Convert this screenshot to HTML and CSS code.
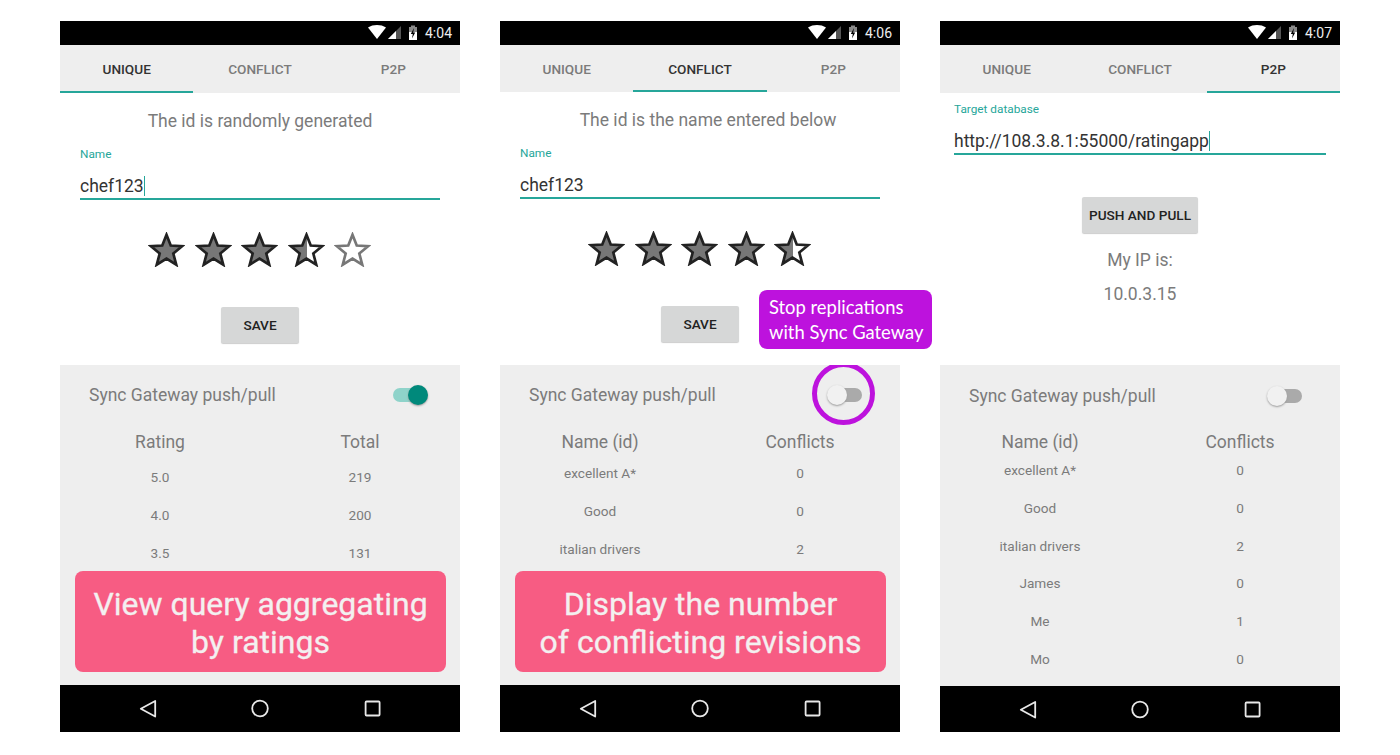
FILE: index.html
```html
<!DOCTYPE html>
<html lang="en">
<head>
  <meta charset="utf-8">
  <title>Rating app screens</title>
  <link rel="stylesheet" href="styles.css">
</head>
<body>

<svg class="defs" aria-hidden="true">
  <defs>
    <linearGradient id="half">
      <stop offset="50%" stop-color="#777"/>
      <stop offset="50%" stop-color="#fff"/>
    </linearGradient>
    <symbol id="star" viewBox="0 0 40 38">
      <polygon points="20,3 24.6,14.7 37,15.4 27.4,23.4 30.6,35.5 20,28.8 9.4,35.5 12.6,23.4 3,15.4 15.4,14.7"/>
    </symbol>
    <symbol id="status" viewBox="0 0 50 16">
      <path d="M0 2.5 C5 -0.8 13 -0.8 18 2.5 L9 14 Z" fill="#fff"/>
      <path d="M20 14 L33 1 V14 Z" fill="#555"/>
      <path d="M20 14 L28 6 V14 Z" fill="#fff"/>
      <path d="M43 0.5 V2 H41 V15 H49 V2 H47 V0.5 Z" fill="#888"/>
      <path d="M41 7 H49 V15 H41 Z" fill="#fff"/>
      <path d="M46 3 L42.8 9 H44.8 L44 13.5 L47.2 7.5 H45.2 Z" fill="#000"/>
    </symbol>
    <symbol id="navbar">
      <g fill="none" stroke="#e8e8e8" stroke-width="1.8" stroke-linejoin="round">
        <path d="M95.2 16 V31.5 L80.8 23.7 Z"/>
        <circle cx="200" cy="23.5" r="7.8"/>
        <rect x="305.6" y="16.5" width="14" height="14" rx="1"/>
      </g>
    </symbol>
  </defs>
</svg>

<div class="phone">
  <div class="statusbar">
    <svg class="status-icons"><use href="#status"/></svg>
    <span class="clock">4:04</span>
  </div>
  <div class="tabs">
    <div class="tab active">UNIQUE</div>
    <div class="tab">CONFLICT</div>
    <div class="tab">P2P</div>
  </div>
  <div class="content">
    <p class="caption">The id is randomly generated</p>
    <div class="field">
      <label class="field-label">Name</label>
      <div class="field-input"><span class="typed">chef123</span></div>
    </div>
    <div class="stars">
      <svg class="star"><use href="#star"/></svg>
      <svg class="star"><use href="#star"/></svg>
      <svg class="star"><use href="#star"/></svg>
      <svg class="star half"><use href="#star"/></svg>
      <svg class="star empty"><use href="#star"/></svg>
    </div>
    <button class="btn">SAVE</button>
  </div>
  <div class="sync">
    <div class="sync-row">
      <span>Sync Gateway push/pull</span>
      <span class="toggle on"></span>
    </div>
    <div class="grid-head">
      <span>Rating</span><span>Total</span>
    </div>
    <div class="grid-rows">
      <span>5.0</span><span>219</span>
      <span>4.0</span><span>200</span>
      <span>3.5</span><span>131</span>
    </div>
    <div class="note">View query aggregating<br>by ratings</div>
  </div>
  <svg class="navbar"><use href="#navbar"/></svg>
</div>

<div class="phone second">
  <div class="statusbar">
    <svg class="status-icons"><use href="#status"/></svg>
    <span class="clock">4:06</span>
  </div>
  <div class="tabs">
    <div class="tab">UNIQUE</div>
    <div class="tab active">CONFLICT</div>
    <div class="tab">P2P</div>
  </div>
  <div class="content">
    <p class="caption">The id is the name entered below</p>
    <div class="field">
      <label class="field-label">Name</label>
      <div class="field-input"><span>chef123</span></div>
    </div>
    <div class="stars">
      <svg class="star"><use href="#star"/></svg>
      <svg class="star"><use href="#star"/></svg>
      <svg class="star"><use href="#star"/></svg>
      <svg class="star"><use href="#star"/></svg>
      <svg class="star half"><use href="#star"/></svg>
    </div>
    <button class="btn">SAVE</button>
    <div class="tip">Stop replications<br>with Sync Gateway</div>
  </div>
  <div class="sync">
    <div class="sync-row">
      <span>Sync Gateway push/pull</span>
      <span class="toggle"></span>
      <span class="ring"></span>
    </div>
    <div class="grid-head">
      <span>Name (id)</span><span>Conflicts</span>
    </div>
    <div class="grid-rows">
      <span>excellent A*</span><span>0</span>
      <span>Good</span><span>0</span>
      <span>italian drivers</span><span>2</span>
    </div>
    <div class="note">Display the number<br>of conflicting revisions</div>
  </div>
  <svg class="navbar"><use href="#navbar"/></svg>
</div>

<div class="phone third">
  <div class="statusbar">
    <svg class="status-icons"><use href="#status"/></svg>
    <span class="clock">4:07</span>
  </div>
  <div class="tabs">
    <div class="tab">UNIQUE</div>
    <div class="tab">CONFLICT</div>
    <div class="tab active">P2P</div>
  </div>
  <div class="content">
    <div class="field">
      <label class="field-label">Target database</label>
      <div class="field-input"><span class="typed">http://108.3.8.1:55000/ratingapp</span></div>
    </div>
    <button class="btn">PUSH AND PULL</button>
    <p class="caption ip">My IP is:</p>
    <p class="caption ip">10.0.3.15</p>
  </div>
  <div class="sync">
    <div class="sync-row">
      <span>Sync Gateway push/pull</span>
      <span class="toggle"></span>
    </div>
    <div class="grid-head">
      <span>Name (id)</span><span>Conflicts</span>
    </div>
    <div class="grid-rows">
      <span>excellent A*</span><span>0</span>
      <span>Good</span><span>0</span>
      <span>italian drivers</span><span>2</span>
      <span>James</span><span>0</span>
      <span>Me</span><span>1</span>
      <span>Mo</span><span>0</span>
    </div>
  </div>
  <svg class="navbar"><use href="#navbar"/></svg>
</div>

</body>
</html>
```

FILE: styles.css
```css
html, body {
  margin: 0;
  height: 100%;
  overflow: hidden;
}
body {
  background: #fff;
  color: #7b7b7b;
  display: flex;
  gap: 40px;
  padding: 21px 0 0 60px;
  box-sizing: border-box;
  font-family: Roboto, "Liberation Sans", sans-serif;
}
.defs {
  position: absolute;
  width: 0;
  height: 0;
}
.phone {
  display: flex;
  flex-direction: column;
  width: 400px;
  height: 711px;
  position: relative;
}

/* status bar */
.statusbar {
  background: #000;
  color: #eee;
  display: flex;
  align-items: center;
  justify-content: flex-end;
  height: 24px;
  flex: none;
  padding-right: 8px;
}
.status-icons {
  width: 50px;
  height: 16px;
  margin-right: 7px;
}
.clock {
  font-size: 14px;
}

/* tabs */
.tabs {
  background: #eee;
  display: flex;
  height: 48px;
  flex: none;
}
.second .tabs {
  height: 47px;
}
.tab {
  flex: 1;
  display: flex;
  align-items: center;
  justify-content: center;
  box-sizing: border-box;
  border-bottom: 2px solid transparent;
  padding-top: 2px;
  font-size: 13.6px;
  font-weight: 500;
  color: #7b7b7b;
}
.tab.active {
  border-bottom-color: #26a69a;
  color: #333;
}

/* white part */
.content {
  flex: 1;
  display: flex;
  flex-direction: column;
  align-items: center;
  padding: 16px 20px 0;
  position: relative;
}
.third .content {
  padding: 9px 14px 0;
}
.caption {
  margin: 0;
  font-size: 17.5px;
  line-height: 24px;
  color: #7b7b7b;
}
.second .caption {
  margin-left: 16px;
}
.field {
  align-self: stretch;
  margin-top: 14px;
}
.third .field {
  margin-top: 0;
}
.field-label {
  display: block;
  font-size: 11.8px;
  line-height: 14px;
  color: #26a69a;
}
.field-input {
  margin-top: 13px;
  height: 24px;
  border-bottom: 2px solid #26a69a;
  font-size: 17.5px;
  line-height: 24px;
  color: #333;
}
.typed {
  border-right: 1px solid #26a69a;
}
.stars {
  display: flex;
  gap: 9.5px;
  margin-top: 32px;
  margin-left: -1px;
}
.star {
  width: 37px;
  height: 35px;
  fill: #777;
  stroke: #222;
  stroke-width: 2.9;
}
.star.half {
  fill: url(#half);
}
.star.empty {
  fill: #fff;
  stroke: #777;
}
.btn {
  background: #d6d7d7;
  border: 0;
  border-radius: 2px;
  box-shadow: 0 1px 1px #ccc;
  color: #222;
  font-family: inherit;
  font-size: 13.6px;
  font-weight: 500;
  height: 36px;
  padding: 0 22px;
  margin-top: 40px;
}
.third .btn {
  padding: 0 7px;
  margin-top: 42px;
  margin-bottom: 10px;
}
.ip {
  line-height: 34px;
}
.tip {
  position: absolute;
  left: 259px;
  top: 198px;
  width: 173px;
  height: 59px;
  box-sizing: border-box;
  padding: 5px 10px;
  border-radius: 8px;
  background: #bd12dd;
  color: #fff;
  font-family: Lato, sans-serif;
  font-size: 18.4px;
  line-height: 25px;
  white-space: nowrap;
}

/* grey part */
.sync {
  background: #eee;
  height: 320px;
  flex: none;
  position: relative;
  overflow: hidden;
}
.third .sync {
  height: 321px;
}
.sync-row {
  display: flex;
  align-items: center;
  justify-content: space-between;
  padding: 18px 32px 0 29px;
  height: 24px;
  font-size: 17.5px;
  line-height: 24px;
}
.third .sync-row {
  padding-top: 19px;
}
.toggle {
  width: 34px;
  height: 14px;
  border-radius: 7px;
  background: #aaa;
  position: relative;
  margin-right: 6px;
}
.toggle::after {
  content: "";
  position: absolute;
  left: -1px;
  top: -3px;
  width: 20px;
  height: 20px;
  border-radius: 50%;
  background: #f1f1f1;
  box-shadow: 0 1px 2px #999;
}
.toggle.on {
  background: #8fd3ca;
  margin-right: 1px;
}
.toggle.on::after {
  left: 15px;
  background: #00897b;
}
.ring {
  position: absolute;
  left: 312px;
  top: -3px;
  width: 63px;
  height: 63px;
  box-sizing: border-box;
  border: 5.5px solid #bd12dd;
  border-radius: 50%;
}
.grid-head, .grid-rows {
  display: grid;
  grid-template-columns: 1fr 1fr;
  text-align: center;
}
.grid-head {
  margin-top: 23px;
  font-size: 17.5px;
  line-height: 24px;
}
.third .grid-head {
  margin-top: 22px;
}
.grid-rows {
  margin-top: 13px;
  font-size: 13.6px;
  line-height: 20px;
  row-gap: 17.75px;
}
.second .grid-rows {
  margin-top: 9px;
}
.third .grid-rows {
  margin-top: 6px;
}
.note {
  position: absolute;
  left: 15px;
  top: 206px;
  width: 371px;
  height: 101px;
  box-sizing: border-box;
  padding: 14px 0;
  border-radius: 8px;
  background: #f75c83;
  color: #f3f0f0;
  font-size: 32px;
  line-height: 38px;
  text-align: center;
  -webkit-text-stroke: 0.3px #f3f0f0;
}

.navbar {
  background: #000;
  width: 400px;
  height: 47px;
  flex: none;
}
.third .navbar {
  height: 46px;
}
```
